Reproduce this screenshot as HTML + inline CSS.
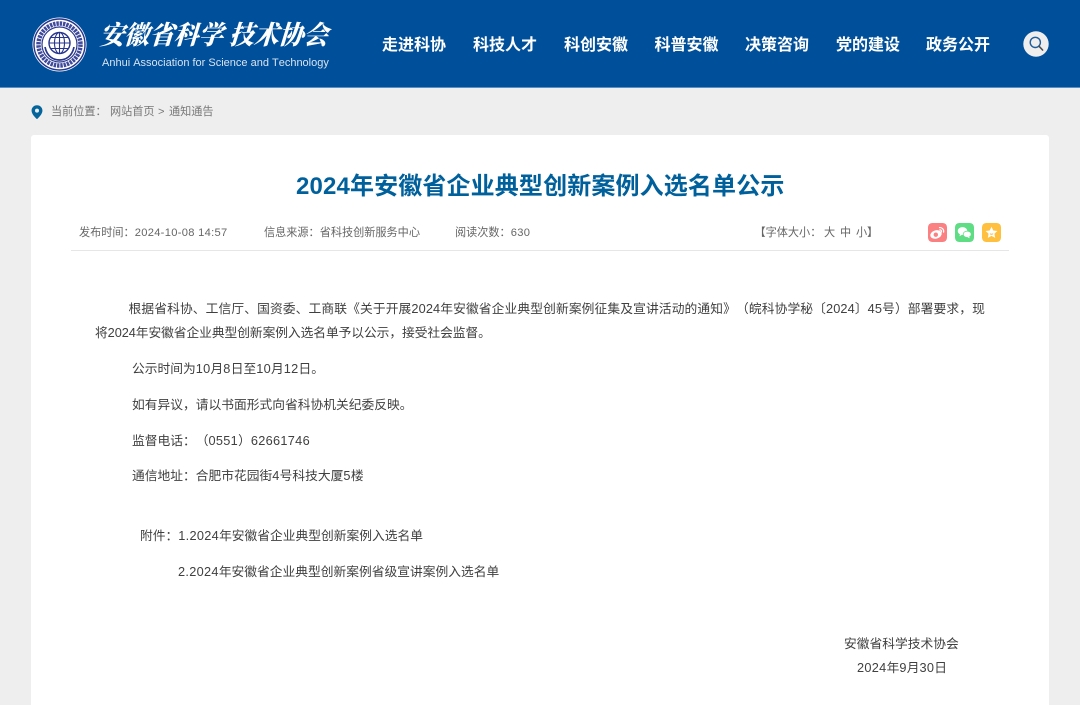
<!DOCTYPE html>
<html lang="zh"><head><meta charset="utf-8">
<style>
*{margin:0;padding:0;box-sizing:border-box}
html,body{width:1080px;height:705px;overflow:hidden;background:#eeeeee}
body{position:relative;font-family:"Liberation Sans","Noto Sans CJK SC",sans-serif;text-spacing-trim:space-all;font-kerning:none}
.t{position:absolute;white-space:nowrap;line-height:20px}
header{position:absolute;left:0;top:0;width:1080px;height:87.5px;background:#004f9a;border-bottom:1px solid #5b8fc2}
.n{position:absolute;top:35px;font-size:16px;line-height:22px;font-weight:700;color:#fff;white-space:nowrap}
.card{position:absolute;left:31px;top:135px;width:1018px;height:580px;background:#fff;border-radius:3px}
.m{font-size:11.15px;color:#666}
.b{font-size:12.75px;color:#404040}
.b i{font-style:normal;letter-spacing:.3px}
.ic{position:absolute;top:223px;width:19px;height:19px;border-radius:4px}
</style></head><body>
<header>
<svg style="position:absolute;left:32px;top:17px" width="55" height="55" viewBox="0 0 55 55">
<circle cx="27.5" cy="27.5" r="27" fill="#fff"/>
<circle cx="27.5" cy="27.5" r="25.5" fill="none" stroke="#27358c" stroke-width="1.4"/>
<circle cx="27.5" cy="27.5" r="21" fill="none" stroke="#3f4a9c" stroke-width="4.5" stroke-dasharray="2.4 .9"/>
<circle cx="27.5" cy="27.5" r="17.5" fill="none" stroke="#27358c" stroke-width="1.2"/>
<circle cx="27.5" cy="26" r="10.5" fill="none" stroke="#27358c" stroke-width="1.4"/>
<ellipse cx="27.5" cy="26" rx="5" ry="10.5" fill="none" stroke="#27358c" stroke-width="1.1"/>
<path d="M27.5 15.5V36.5M17 26H38M18.5 20.5H36.5M18.5 31.5H36.5" fill="none" stroke="#27358c" stroke-width="1.1"/>
<path d="M13 30C15 40 22 43 27.5 43C33 43 40 40 42 30" fill="none" stroke="#27358c" stroke-width="1.7"/>
</svg>
<div class="t" style="left:100px;top:17px;font:italic 900 26px/34px 'Noto Serif CJK SC',serif;color:#fff;transform-origin:0 50%;transform:scaleX(.95) skewX(-4deg)">安徽省科学 技术协会</div>
<div class="t" style="left:102px;top:54px;font-size:11px;line-height:18px;color:#d7e4f2">Anhui Association for Science and Technology</div>
<div class="n" style="left:382px">走进科协</div>
<div class="n" style="left:473px">科技人才</div>
<div class="n" style="left:564px">科创安徽</div>
<div class="n" style="left:654.5px">科普安徽</div>
<div class="n" style="left:745px">决策咨询</div>
<div class="n" style="left:836px">党的建设</div>
<div class="n" style="left:926px">政务公开</div>
<svg style="position:absolute;left:1023px;top:31px" width="26" height="26" viewBox="0 0 26 26">
<circle cx="13" cy="13" r="12.7" fill="#eeeeee"/>
<circle cx="12.3" cy="11.4" r="5.1" fill="none" stroke="#1f5f9e" stroke-width="1.4"/>
<path d="M16 15.2L19.6 19" stroke="#4a4f55" stroke-width="1.6" stroke-linecap="round"/>
</svg>
</header>

<svg style="position:absolute;left:30.5px;top:104.5px" width="12" height="14.5" viewBox="0 0 13 16">
<path d="M6.5 0.3C3 0.3 .5 3 .5 6.2C.5 10 4.5 13.6 6.5 15.7C8.5 13.6 12.5 10 12.5 6.2C12.5 3 10 .3 6.5 .3Z" fill="#03659b"/>
<circle cx="6.5" cy="6.2" r="2.2" fill="#eee"/>
</svg>
<div class="t m" style="left:51px;top:101.5px;color:#777">当前位置：</div>
<div class="t m" style="left:110px;top:101.5px;color:#777">网站首页</div>
<div class="t m" style="left:158px;top:101.5px;color:#777">&gt;</div>
<div class="t m" style="left:169px;top:101.5px;color:#777">通知通告</div>

<div class="card"></div>
<div class="t" style="left:296px;top:171px;font-size:24px;line-height:32px;font-weight:700;color:#00609c;letter-spacing:.14px">2024年安徽省企业典型创新案例入选名单公示</div>

<div class="t m" style="left:79px;top:222.5px">发布时间：<span style="letter-spacing:.3px">2024-10-08 14:57</span></div>
<div class="t m" style="left:264px;top:222.5px">信息来源：省科技创新服务中心</div>
<div class="t m" style="left:455px;top:222.5px">阅读次数：<span style="letter-spacing:.3px">630</span></div>
<div class="t m" style="left:754.5px;top:222.5px">【字体大小：</div>
<div class="t m" style="left:824px;top:222.5px">大</div>
<div class="t m" style="left:840px;top:222.5px">中</div>
<div class="t m" style="left:856px;top:222.5px">小</div>
<div class="t m" style="left:867px;top:222.5px">】</div>

<svg class="ic" style="left:928px" viewBox="0 0 19 19"><rect width="19" height="19" rx="4" fill="#fb8082"/>
<ellipse cx="8" cy="11.5" rx="5.8" ry="4.2" fill="#fff" transform="rotate(-15 8 11.5)"/><circle cx="7.8" cy="11.7" r="2.2" fill="#fb8082"/>
<path d="M11.5 4.6C14 4.3 16.2 6.5 15.6 9.2M11.8 6.9C13 6.8 13.8 7.7 13.5 8.9" fill="none" stroke="#fff" stroke-width="1.2" stroke-linecap="round"/></svg>
<svg class="ic" style="left:955px" viewBox="0 0 19 19"><rect width="19" height="19" rx="4" fill="#5fdd85"/>
<ellipse cx="7.5" cy="8" rx="4.8" ry="3.9" fill="#fff"/><path d="M5 11L4.5 13.3L7.3 11.5Z" fill="#fff"/>
<ellipse cx="12.2" cy="11.3" rx="4" ry="3.2" fill="#fff" stroke="#5fdd85" stroke-width=".7"/><path d="M14 13.6L14.8 15.3L12.5 14.2Z" fill="#fff"/></svg>
<svg class="ic" style="left:982px" viewBox="0 0 19 19"><rect width="19" height="19" rx="4" fill="#ffc040"/>
<path d="M9.5 3.8L11.3 7.5L15.4 8L12.4 10.8L13.2 14.9L9.5 12.9L5.8 14.9L6.6 10.8L3.6 8L7.7 7.5Z" fill="#fff"/>
<path d="M7.8 10.6Q9.5 12 11.2 10.6" fill="none" stroke="#ffc040" stroke-width="1"/></svg>

<div style="position:absolute;left:71px;top:250px;width:938px;height:1px;background:#e6e6e6"></div>

<div class="t b" style="left:128.5px;top:299px;letter-spacing:.11px">根据省科协、工信厅、国资委、工商联《关于开展2024年安徽省企业典型创新案例征集及宣讲活动的通知》（皖科协学秘〔2024〕45号）部署要求，现</div>
<div class="t b" style="left:95px;top:323px;letter-spacing:-.07px">将2024年安徽省企业典型创新案例入选名单予以公示，接受社会监督。</div>
<div class="t b" style="left:132px;top:359px">公示时间为<i>10</i>月<i>8</i>日至<i>10</i>月<i>12</i>日。</div>
<div class="t b" style="left:132px;top:395px">如有异议，请以书面形式向省科协机关纪委反映。</div>
<div class="t b" style="left:132px;top:431px">监督电话：（<i>0551</i>）<i>62661746</i></div>
<div class="t b" style="left:132px;top:466px">通信地址：合肥市花园街<i>4</i>号科技大厦<i>5</i>楼</div>
<div class="t b" style="left:140px;top:526px">附件：<i>1.2024</i>年安徽省企业典型创新案例入选名单</div>
<div class="t b" style="left:178px;top:562px"><i>2.2024</i>年安徽省企业典型创新案例省级宣讲案例入选名单</div>
<div class="t b" style="left:844px;top:634px">安徽省科学技术协会</div>
<div class="t b" style="left:857px;top:658px"><i>2024</i>年<i>9</i>月<i>30</i>日</div>
</body></html>
